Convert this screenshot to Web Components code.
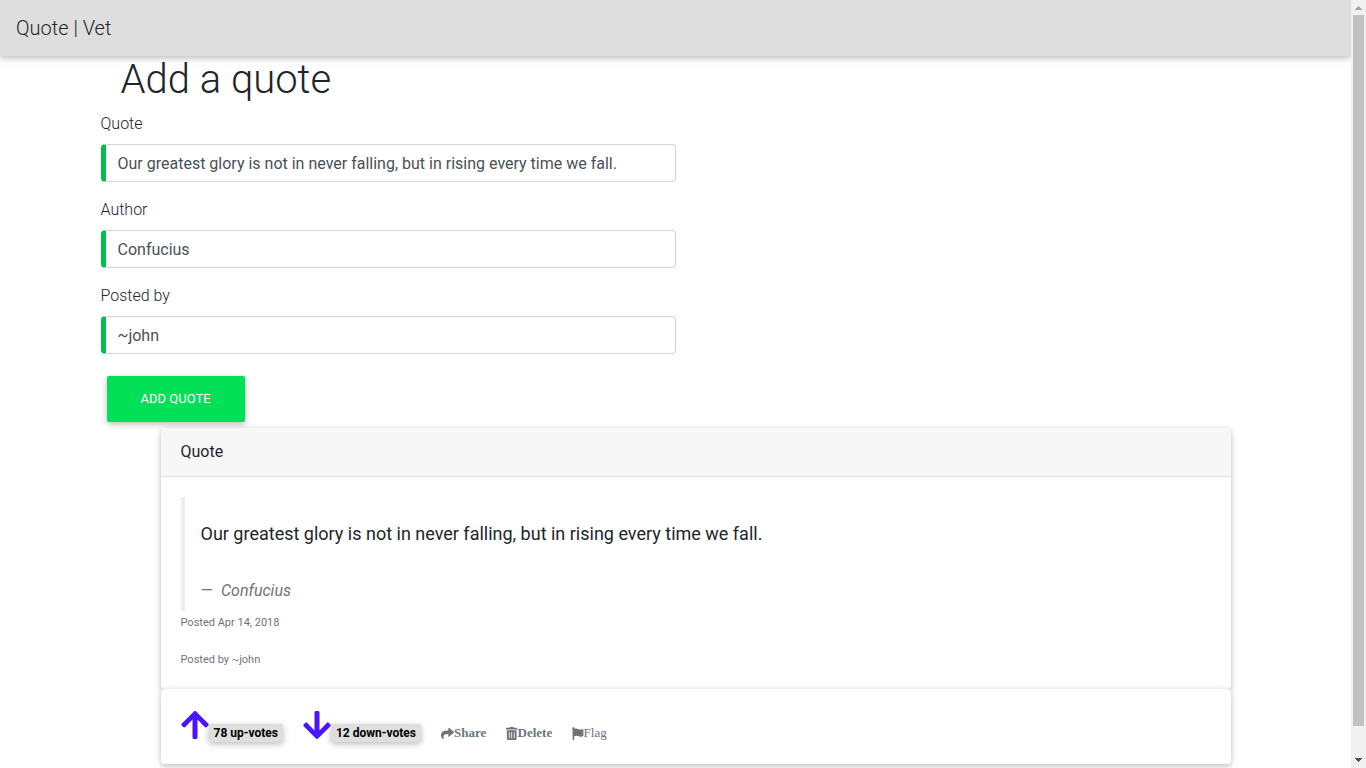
<!DOCTYPE html>
<html lang="en">
<head>
<meta charset="utf-8">
<meta name="viewport" content="width=device-width, initial-scale=1">
<title>Quote | Vet</title>
<style>
html { scrollbar-width: none; }
body { margin: 0; background: #fff; color: #212529; font: 400 16px/24px Roboto, sans-serif; }
</style>
</head>
<body>
<quote-app></quote-app>

<template id="app-template">
  <style>
    :host { display: grid; grid-template-columns: minmax(0, 1fr) 15px; }
    .content { display: flow-root; }
    main { max-width: 1150px; margin: 0 auto; }
    h1 { margin: 0 20px 8px; font-size: 40px; line-height: 48px; font-weight: 300; }
    form { display: flow-root; }
    .fields { width: 50%; display: grid; gap: 16px; margin-bottom: 22px; }
    button {
      display: block; margin: 0 6px 6px; height: 46px; padding: 0 34px; border: 0; border-radius: 2px;
      background: #02e058; color: #fff; font: 400 13px/20px Roboto, sans-serif; text-transform: uppercase; cursor: pointer;
      box-shadow: 0 2px 5px rgba(0,0,0,.16), 0 2px 10px rgba(0,0,0,.12);
    }
    quote-card { margin: 0 20px 0 60px; }
  </style>
  <div class="content">
    <nav-bar><a slot="brand" href="#">Quote | Vet</a></nav-bar>
    <main>
      <h1>Add a quote</h1>
      <form>
        <div class="fields">
          <form-field label="Quote" value="Our greatest glory is not in never falling, but in rising every time we fall."></form-field>
          <form-field label="Author" value="Confucius"></form-field>
          <form-field label="Posted by" value="~john"></form-field>
        </div>
        <button type="button">Add quote</button>
      </form>
      <quote-card>
        <span slot="title">Quote</span>
        <span slot="text">Our greatest glory is not in never falling, but in rising every time we fall.</span>
        <span slot="author">Confucius</span>
        <span slot="date">Posted Apr 14, 2018</span>
        <span slot="poster">Posted by ~john</span>
        <vote-button slot="actions" icon="up">78 up-votes</vote-button>
        <vote-button slot="actions" icon="down">12 down-votes</vote-button>
        <action-link slot="actions" icon="share" class="strong">Share</action-link>
        <action-link slot="actions" icon="trash" class="strong">Delete</action-link>
        <action-link slot="actions" icon="flag">Flag</action-link>
      </quote-card>
    </main>
  </div>
  <scroll-track></scroll-track>
</template>

<template id="nav-template">
  <style>
    :host { display: block; position: relative; background: #dedede; padding: 16px; box-shadow: 0 2px 5px rgba(0,0,0,.16), 0 2px 10px rgba(0,0,0,.12); }
    ::slotted(a) { display: inline-block; vertical-align: top; font-size: 20px; line-height: 24px; font-weight: 300; color: #212529; text-decoration: none; }
  </style>
  <slot name="brand"></slot>
</template>

<template id="field-template">
  <style>
    :host { display: block; }
    label { display: block; margin-bottom: 8px; font-weight: 300; }
    input {
      display: block; box-sizing: border-box; width: 100%; height: 38px; padding: 6px 12px; border: 1px solid #ced4da;
      border-left: 5px solid #00be4b; border-radius: 4px; background: #fff; color: #495057; font: 400 16px/24px Roboto, sans-serif; outline: 0;
    }
  </style>
  <label for="control"></label>
  <input id="control" type="text">
</template>

<template id="card-template">
  <style>
    :host { display: block; }
    section, footer.bar { background: #fff; border-radius: 4px; box-shadow: 0 2px 5px rgba(0,0,0,.16), 0 2px 10px rgba(0,0,0,.12); }
    header { padding: 12px 20px; background: #f7f7f7; border-bottom: 1px solid #dfdfdf; border-radius: 4px 4px 0 0; }
    .body { padding: 20px 20px 17px; }
    blockquote { margin: 0; padding: 24px 16px 8px; border-left: 4px solid #eceeef; }
    blockquote p { margin: 0 0 32px; font-size: 18px; line-height: 26px; }
    blockquote footer { display: flex; gap: 8px; color: #6c757d; }
    .meta { display: grid; gap: 13px; font-size: 11px; line-height: 24px; color: #6c757d; }
    footer.bar { display: flex; align-items: flex-end; gap: 20px; padding: 19px 20px 22px; position: relative; }
  </style>
  <section>
    <header><slot name="title"></slot></header>
    <div class="body">
      <blockquote>
        <p><slot name="text"></slot></p>
        <footer><span>—</span><cite><slot name="author"></slot></cite></footer>
      </blockquote>
      <div class="meta"><slot name="date"></slot><slot name="poster"></slot></div>
    </div>
  </section>
  <footer class="bar"><slot name="actions"></slot></footer>
</template>

<template id="vote-template">
  <style>
    :host { display: block; }
    button { display: flex; align-items: flex-end; padding: 0; border: 0; background: none; cursor: pointer; font: 700 12px/18px Roboto, sans-serif; color: #000; }
    svg { width: 28px; height: 32px; margin: 1px 0; fill: #4b14ff; }
    span { padding: 0 5px; border-radius: 2px; background: #dedede; box-shadow: 0 2px 5px rgba(0,0,0,.16), 0 2px 10px rgba(0,0,0,.12); }
  </style>
  <button type="button"><svg aria-hidden="true"><path/></svg><span><slot></slot></span></button>
</template>

<template id="link-template">
  <style>
    :host { display: block; }
    a { display: flex; align-items: center; color: #6c757d; text-decoration: none; font: 400 13px/18px "Liberation Serif", serif; }
    :host(.strong) a { font-weight: 700; }
    svg { height: 13px; fill: currentColor; }
  </style>
  <a href="#"><svg aria-hidden="true"><path/></svg><slot></slot></a>
</template>

<template id="track-template">
  <style>
    :host { display: grid; grid-template-rows: 15px minmax(0, 711fr) minmax(0, 27fr) 15px; position: sticky; top: 0; height: 100vh; background: #f1f1f1; }
    svg { width: 15px; height: 15px; fill: #505050; }
    svg:first-of-type { fill: #a3a3a3; }
    .thumb { margin: 0 2px; background: #c1c1c1; }
    svg:last-of-type { grid-row: 4; }
  </style>
  <svg viewBox="0 0 15 15" aria-hidden="true"><path d="M7 6h1v1h1v1h1v1h1v1H4V9h1V8h1V7h1z"/></svg>
  <div class="thumb"></div>
  <svg viewBox="0 0 15 15" aria-hidden="true"><path d="M4 5h7v1h-1v1H9v1H8v1H7V8H6V7H5V6H4z"/></svg>
</template>

<script>
const icons = {
  up: ['0 0 448 512', 'M34.9 289.5l-22.2-22.2c-9.4-9.4-9.4-24.6 0-33.9L207 39c9.4-9.4 24.6-9.4 33.9 0l194.3 194.3c9.4 9.4 9.4 24.6 0 33.9L413 289.4c-9.5 9.5-25 9.3-34.3-.4L264 168.6V456c0 13.3-10.7 24-24 24h-32c-13.3 0-24-10.7-24-24V168.6L69.2 289.1c-9.3 9.8-24.8 10-34.3.4z'],
  down: ['0 0 448 512', 'M413.1 222.5l22.2 22.2c9.4 9.4 9.4 24.6 0 33.9L241 473c-9.4 9.4-24.6 9.4-33.9 0L12.7 278.6c-9.4-9.4-9.4-24.6 0-33.9l22.2-22.2c9.5-9.5 25-9.3 34.3.4L184 343.4V56c0-13.3 10.7-24 24-24h32c13.3 0 24 10.7 24 24v287.4l114.8-120.5c9.3-9.8 24.8-10 34.3-.4z'],
  share: ['0 0 512 512', 'M503.691 189.836L327.687 37.851C312.281 24.546 288 35.347 288 56.015v80.053C127.371 137.907 0 170.1 0 322.326c0 61.441 39.581 122.309 83.333 154.132 13.653 9.931 33.111-2.533 28.077-18.631C66.066 312.814 132.917 274.316 288 272.085V360c0 20.7 24.3 31.453 39.687 18.164l176.004-152c11.071-9.562 11.086-26.753 0-36.328z'],
  trash: ['0 0 448 512', 'M32 464a48 48 0 0 0 48 48h288a48 48 0 0 0 48-48V128H32zm272-256a16 16 0 0 1 32 0v224a16 16 0 0 1-32 0zm-96 0a16 16 0 0 1 32 0v224a16 16 0 0 1-32 0zm-96 0a16 16 0 0 1 32 0v224a16 16 0 0 1-32 0zM432 32H312l-9.4-18.7A24 24 0 0 0 281.1 0H166.8a23.72 23.72 0 0 0-21.4 13.3L136 32H16A16 16 0 0 0 0 48v32a16 16 0 0 0 16 16h416a16 16 0 0 0 16-16V48a16 16 0 0 0-16-16z'],
  flag: ['0 0 448 512', 'M8 56a48 48 0 1 1 92 19c25-8 56-14 90-11 59 4 102 35 160 35 38 0 72-12 98-24v275c-31 19-66 32-102 31-60-2-104-35-162-35-40 0-74 11-96 22v120c0 13-9 24-22 24H48c-13 0-24-11-24-24V102C14 92 8 76 8 56z']
};

class TemplateElement extends HTMLElement {
  constructor() {
    super();
    this.attachShadow({ mode: 'open' }).append(document.getElementById(this.constructor.template).content.cloneNode(true));
  }
}
class IconElement extends TemplateElement {
  connectedCallback() {
    const [box, path] = icons[this.getAttribute('icon')];
    const svg = this.shadowRoot.querySelector('svg');
    const [, , w, h] = box.split(' ').map(Number);
    svg.setAttribute('viewBox', box);
    svg.style.aspectRatio = w + ' / ' + h;
    svg.firstElementChild.setAttribute('d', path);
  }
}
class NavBar extends TemplateElement { static template = 'nav-template'; }
class FormField extends TemplateElement {
  static template = 'field-template';
  connectedCallback() {
    this.shadowRoot.querySelector('label').textContent = this.getAttribute('label');
    this.shadowRoot.querySelector('input').value = this.getAttribute('value');
  }
}
class QuoteCard extends TemplateElement { static template = 'card-template'; }
class VoteButton extends IconElement { static template = 'vote-template'; }
class ActionLink extends IconElement { static template = 'link-template'; }
class ScrollTrack extends TemplateElement { static template = 'track-template'; }
class QuoteApp extends TemplateElement { static template = 'app-template'; }

customElements.define('nav-bar', NavBar);
customElements.define('form-field', FormField);
customElements.define('quote-card', QuoteCard);
customElements.define('vote-button', VoteButton);
customElements.define('action-link', ActionLink);
customElements.define('scroll-track', ScrollTrack);
customElements.define('quote-app', QuoteApp);
</script>
</body>
</html>
